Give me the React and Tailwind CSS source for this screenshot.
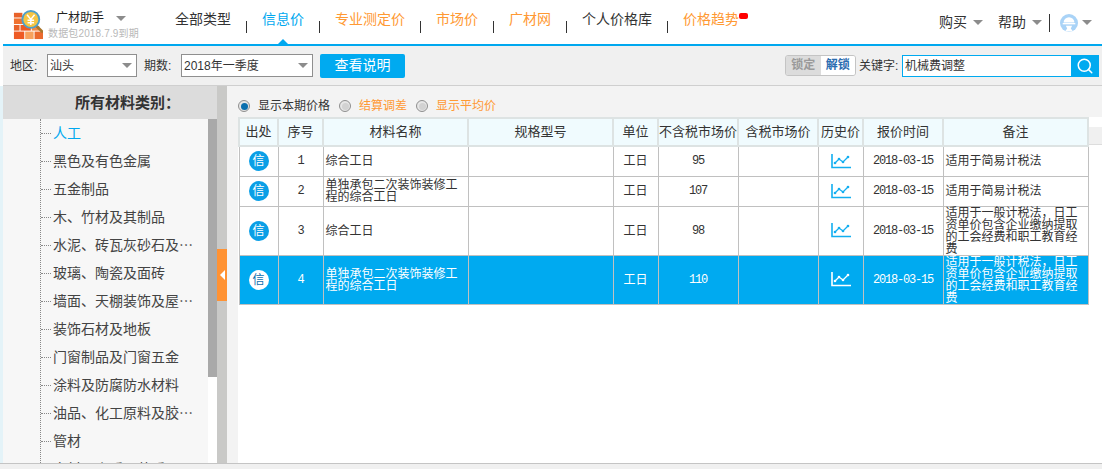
import React from 'react';
import { Search } from 'lucide-react';

const FONT = '[font-family:"Liberation_Sans","Noto_Sans_CJK_SC",sans-serif]';

const navItems = [
  { label: '全部类型', color: 'text-[#333333]' },
  { label: '信息价', color: 'text-[#00a8ef]', active: true },
  { label: '专业测定价', color: 'text-[#ff9933]' },
  { label: '市场价', color: 'text-[#ff9933]' },
  { label: '广材网', color: 'text-[#ff9933]' },
  { label: '个人价格库', color: 'text-[#333333]' },
  { label: '价格趋势', color: 'text-[#ff9933]', dot: true },
];

const categories = [
  '人工',
  '黑色及有色金属',
  '五金制品',
  '木、竹材及其制品',
  '水泥、砖瓦灰砂石及⋯',
  '玻璃、陶瓷及面砖',
  '墙面、天棚装饰及屋⋯',
  '装饰石材及地板',
  '门窗制品及门窗五金',
  '涂料及防腐防水材料',
  '油品、化工原料及胶⋯',
  '管材',
  '窗材、水暖及营暖用',
];

const columns = [
  { title: '出处', width: 'w-[39px]' },
  { title: '序号', width: 'w-[45px]' },
  { title: '材料名称', width: 'w-[145px]' },
  { title: '规格型号', width: 'w-[145px]' },
  { title: '单位', width: 'w-[45px]' },
  { title: '不含税市场价', width: 'w-[80px]' },
  { title: '含税市场价', width: 'w-[80px]' },
  { title: '历史价', width: 'w-[45px]' },
  { title: '报价时间', width: 'w-[80px]' },
  { title: '备注', width: 'w-[145px]' },
];

const NOTE_SIMPLE = '适用于简易计税法';
const NOTE_GENERAL = '适用于一般计税法，日工资单价包含企业缴纳提取的工会经费和职工教育经费';
const NAME_LONG = '单独承包二次装饰装修工程的综合工日';

const rows = [
  { id: 1, name: '综合工日', price: '95', note: NOTE_SIMPLE, height: 'h-[30px]' },
  { id: 2, name: NAME_LONG, price: '107', note: NOTE_SIMPLE, height: 'h-[30px]' },
  { id: 3, name: '综合工日', price: '98', note: NOTE_GENERAL, height: 'h-[49px]' },
  { id: 4, name: NAME_LONG, price: '110', note: NOTE_GENERAL, height: 'h-[49px]', selected: true },
];

const Caret = ({ className = '' }) => (
  <span className={`inline-block w-0 h-0 border-x-[5px] border-x-transparent border-t-[5px] border-t-[#8c8c8c] ${className}`} />
);

const Logo = () => (
  <svg width="30" height="30" viewBox="0 0 32 32" className="shrink-0">
    <rect x="1" y="3" width="9" height="5" fill="#e8622a" />
    <rect x="1" y="9" width="12" height="6" fill="#f0712f" />
    <rect x="1" y="16" width="6" height="6" fill="#e8622a" />
    <rect x="8" y="16" width="11" height="6" fill="#ee5a24" />
    <rect x="20" y="17" width="8" height="5" fill="#f28a45" />
    <rect x="1" y="23" width="11" height="8" fill="#ee5a24" />
    <rect x="13" y="23" width="9" height="8" fill="#f7a25e" />
    <rect x="23" y="23" width="9" height="8" fill="#ea6a2e" />
    <path d="M25 17l6 6" stroke="#a9762c" strokeWidth="3" strokeLinecap="round" />
    <circle cx="19" cy="10" r="9" fill="#f5c542" stroke="#4f9fc9" strokeWidth="2" />
    <path d="M15 5l4 5 4-5M19 10v6M15.500 11h7M15.500 13.500h7" stroke="#ffffff" strokeWidth="1.600" fill="none" />
  </svg>
);

const Helmet = () => (
  <svg width="18" height="18" viewBox="0 0 20 20" className="shrink-0">
    <circle cx="10" cy="10" r="10" fill="#a9d3f7" />
    <path d="M4 9.500a6 6 0 0 1 12 0z" fill="#ffffff" />
    <rect x="3" y="10" width="14" height="1.500" fill="#ffffff" />
    <path d="M6.500 13h7l-1.500 3 2.500 3.500h-9L8 16z" fill="#ffffff" />
  </svg>
);

const TrendIcon = ({ color }) => (
  <svg width="20" height="15" viewBox="0 0 20 15" fill="none" className="mx-auto block">
    <path d="M1 0v13.500h19" stroke={color} strokeWidth="1.600" />
    <path d="M4 9l4-4 4 3 5-5" stroke={color} strokeWidth="1.300" />
    <circle cx="4" cy="9" r="1.300" fill={color} />
    <circle cx="8" cy="5" r="1.300" fill={color} />
    <circle cx="12" cy="8" r="1.300" fill={color} />
    <circle cx="17" cy="3" r="1.300" fill={color} />
  </svg>
);

const Radio = ({ checked }) => (
  <span className="flex items-center justify-center w-[12px] h-[12px] rounded-full border border-[#8f8f8f] bg-[#e6e6e6]">
    <span className={`w-[7px] h-[7px] rounded-full ${checked ? 'bg-[#0b6fae]' : 'bg-[#d2d2d2]'}`} />
  </span>
);

const SelectBox = ({ value, width }) => (
  <div className={`flex items-center justify-between h-[23px] ${width} border border-[#8f8f8f] bg-white pl-[2px] pr-[4px]`}>
    <span className="text-[12px] text-[#333333]">{value}</span>
    <Caret />
  </div>
);

const Header = () => (
  <header className="flex items-stretch h-[46px] bg-white border-b-[2px] border-[#00a8ef] ml-[3px]">
    <div className="flex items-start w-[172px] pl-[10px] pt-[10px]">
      <Logo />
      <div className="ml-[5px]">
        <div className="flex items-center pl-[8px] h-[16px]">
          <span className="text-[12px] text-[#222222] leading-none">广材助手</span>
          <Caret className="ml-[12px]" />
        </div>
        <div className="mt-[1px] text-[10px] tracking-[0.15px] leading-[14px] text-[#b8b8b8] whitespace-nowrap">数据包2018.7.9到期</div>
      </div>
    </div>
    <nav className="flex items-start pt-[11px]">
      {navItems.map((item, index) => (
        <div key={item.label} className="flex items-start">
          {index > 0 && <span className="w-px h-[12px] bg-[#333333] mt-[10px] mx-[15px]" />}
          <div className="relative">
            <span className={`text-[14px] leading-[16px] block ${item.color}`}>{item.label}</span>
            {item.dot && <span className="absolute -right-[9px] top-[2px] w-[9px] h-[6px] rounded-[2px] bg-[#ff0000]" />}
            {item.active && (
              <span className="absolute left-1/2 -translate-x-1/2 top-[28px] w-0 h-0 border-x-[5px] border-x-transparent border-b-[5px] border-b-[#00a8ef]" />
            )}
          </div>
        </div>
      ))}
    </nav>
    <div className="ml-auto flex items-start pt-[14px] pr-[10px]">
      <span className="text-[14px] leading-[16px] text-[#333333]">购买</span>
      <Caret className="ml-[6px] mt-[6px]" />
      <span className="text-[14px] leading-[16px] text-[#333333] ml-[15px]">帮助</span>
      <Caret className="ml-[6px] mt-[6px]" />
      <span className="w-px h-[18px] bg-[#333333] ml-[7px] mr-[10px]" />
      <Helmet />
      <Caret className="ml-[4px] mt-[6px]" />
    </div>
  </header>
);

const Toolbar = () => (
  <div className="flex items-center h-[40px] ml-[3px] bg-[#f0f0f0] border-b border-[#cfcfcf] pl-[7px] pr-[3px]">
    <span className="text-[12px] text-[#333333] w-[37px]">地区:</span>
    <SelectBox value="汕头" width="w-[90px]" />
    <span className="text-[12px] text-[#333333] ml-[7px] w-[37px]">期数:</span>
    <SelectBox value="2018年一季度" width="w-[132px]" />
    <button className="ml-[7px] w-[85px] h-[24px] rounded-[2px] bg-[#00aaf0] text-white text-[14px]">查看说明</button>
    <div className="ml-auto flex items-center">
      <div className="flex h-[21px] w-[71px] rounded-[3px] border border-[#c4c4c4] overflow-hidden text-[12px] font-bold leading-[19px] text-center">
        <span className="flex-1 bg-[#dcdcdc] text-[#9a9a9a]">锁定</span>
        <span className="flex-1 bg-white text-[#2b6cb0]">解锁</span>
      </div>
      <span className="text-[12px] text-[#333333] ml-[3px] w-[43px]">关键字:</span>
      <div className="flex h-[22px] w-[197px] border border-[#00aaf0] bg-white">
        <span className="flex-1 text-[12px] leading-[20px] text-[#333333] pl-[2px]">机械费调整</span>
        <span className="flex items-center justify-center w-[27px] bg-[#00aaf0]">
          <Search size={18} color="#ffffff" strokeWidth={2} />
        </span>
      </div>
    </div>
  </div>
);

const Sidebar = () => (
  <aside className="flex flex-col w-[214px] shrink-0 min-h-0">
    <div className="h-[33px] bg-[#dcdcdc] pl-[72px] text-[15px] leading-[33px] font-bold text-[#333333]">所有材料类别：</div>
    <div className="flex flex-1 min-h-0 overflow-hidden">
      <div className="flex-1 bg-[#f7f7f7] overflow-hidden">
        <ul className="ml-[37px] border-l border-dotted border-[#888888]">
          {categories.map((name, index) => (
            <li key={name} className="flex items-center h-[28px]">
              <span className="w-[10px] mr-[2px] border-t border-dotted border-[#888888]" />
              <span className={`whitespace-nowrap text-[14px] leading-[18px] ${index === 0 ? 'text-[#00a8ef]' : 'text-[#444444]'}`}>{name}</span>
            </li>
          ))}
        </ul>
      </div>
      <div className="w-[9px] bg-white">
        <div className="h-[258px] bg-[#a9a9a9]" />
      </div>
    </div>
  </aside>
);

const Splitter = () => (
  <div className="flex flex-col justify-center w-[10px] shrink-0 bg-[#c9c9c7]">
    <div className="flex items-center justify-center h-[52px] bg-[#ff9233]">
      <span className="w-0 h-0 border-y-[5px] border-y-transparent border-r-[5px] border-r-white" />
    </div>
  </div>
);

const DataTable = () => (
  <div className="flex flex-1 min-h-0 bg-white">
    <table className="table-fixed w-[850px] h-fit border-collapse text-[12px]">
      <colgroup>
        {columns.map((column) => (
          <col key={column.title} className={column.width} />
        ))}
      </colgroup>
      <thead>
        <tr className="h-[28px]">
          {columns.map((column) => (
            <th key={column.title} className="border-2 border-[#dde3e3] bg-[#f0fbfe] p-0 text-[13px] font-normal text-[#333333] whitespace-nowrap">
              {column.title}
            </th>
          ))}
        </tr>
      </thead>
      <tbody>
        {rows.map((row) => {
          const text = row.selected ? 'text-white' : 'text-[#333333]';
          const cell = `border border-[#c0c0c0] p-0 ${text}`;
          const mono = `[font-family:"Liberation_Mono",monospace] text-[12px] tracking-[-1.2px]`;
          return (
            <tr key={row.id} className={`${row.height} ${row.selected ? 'bg-[#00aaf0]' : 'bg-white'}`}>
              <td className={cell}>
                <span className={`flex items-center justify-center mx-auto w-[20px] h-[20px] rounded-full text-[12px] ${row.selected ? 'bg-white text-[#0b6fae]' : 'bg-[#0a9fe6] text-white'}`}>信</span>
              </td>
              <td className={`${cell} ${mono} text-center`}>{row.id}</td>
              <td className={`${cell} pl-[2px] pr-[4px] leading-[12px]`}>{row.name}</td>
              <td className={cell} />
              <td className={`${cell} text-center`}>工日</td>
              <td className={`${cell} ${mono} text-center`}>{row.price}</td>
              <td className={cell} />
              <td className={cell}>
                <TrendIcon color={row.selected ? '#ffffff' : '#12aef0'} />
              </td>
              <td className={`${cell} ${mono} text-center`}>2018-03-15</td>
              <td className={`${cell} pl-[2px] pr-[4px] leading-[12px]`}>{row.note}</td>
            </tr>
          );
        })}
      </tbody>
    </table>
    <div className="flex-1 mt-[10px] h-[18px] bg-[#f0f0f0] border-b border-[#dddddd]" />
  </div>
);

const PriceOption = ({ checked, label, color, className = '' }) => (
  <label className={`flex items-center ${className}`}>
    <Radio checked={checked} />
    <span className={`ml-[8px] text-[12px] ${color}`}>{label}</span>
  </label>
);

const App = () => {
  return (
    <div className={`${FONT} flex flex-col w-[1102px] h-[469px] overflow-hidden bg-white`}>
      <Header />
      <Toolbar />
      <div className="flex flex-1 min-h-0 pl-[3px] bg-[#e4f3f8]">
        <Sidebar />
        <Splitter />
        <main className="flex flex-col flex-1 min-w-0 pl-[11px] bg-[#f3f3f3]">
          <div className="flex items-center h-[31px] pt-[9px]">
            <PriceOption checked label="显示本期价格" color="text-[#333333]" />
            <PriceOption label="结算调差" color="text-[#ff9933]" className="ml-[9px]" />
            <PriceOption label="显示平均价" color="text-[#ff9933]" className="ml-[9px]" />
          </div>
          <DataTable />
        </main>
      </div>
      <div className="h-[6px] shrink-0 bg-[#f0f0f0] border-t border-[#c4c4c4]" />
    </div>
  );
};

export default App;
